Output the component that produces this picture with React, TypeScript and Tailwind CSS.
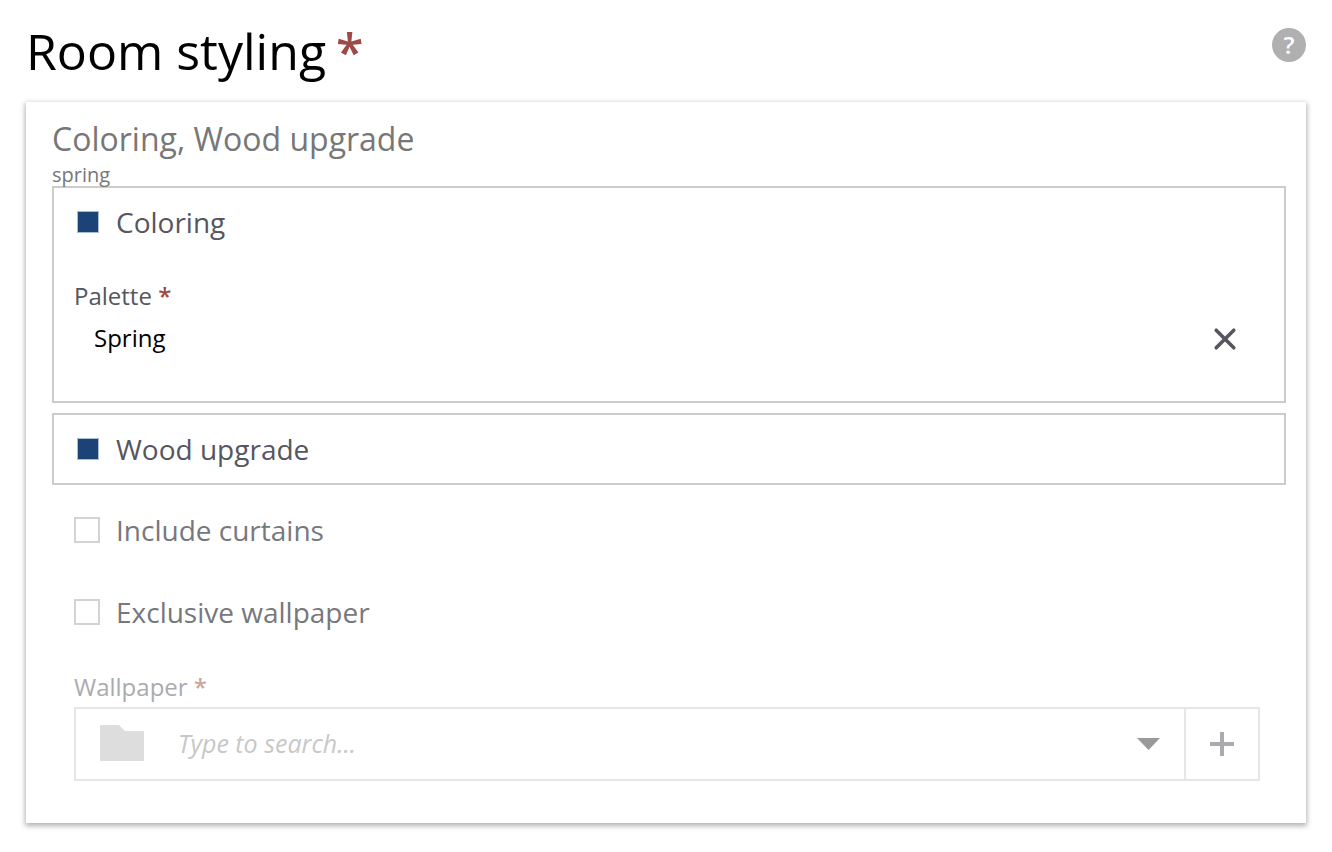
import { useState } from 'react';

type OptionProps = {
  label: string;
  checked: boolean;
  onChange: (checked: boolean) => void;
};

function Option({ label, checked, onChange }: OptionProps) {
  return (
    <label
      className={
        checked
          ? 'flex h-[68px] cursor-pointer items-center pl-6 text-[28px] leading-10 text-[#55565e]'
          : 'flex h-[72px] cursor-pointer items-center pl-[22px] text-[28px] leading-10 text-[#77787e]'
      }
    >
      <input
        type="checkbox"
        checked={checked}
        onChange={(e) => onChange(e.target.checked)}
        className={
          checked
            ? 'size-5 shrink-0 appearance-none bg-[#1b4378] outline-1 outline-[#a9bdd3]'
            : 'size-[26px] shrink-0 appearance-none border-2 border-[#d3d3d3] bg-white'
        }
      />
      <span className={checked ? 'ml-[18px]' : 'ml-4'}>{label}</span>
    </label>
  );
}

export default function App() {
  const [curtains, setCurtains] = useState(false);
  const [exclusive, setExclusive] = useState(false);
  const [coloring, setColoring] = useState(true);
  const [wood, setWood] = useState(true);

  return (
    <main className="bg-white px-[26px] pb-7 font-['Open_Sans',sans-serif]">
      <header className="flex items-start justify-between pb-4">
        <h1 className="pt-4 text-[50px] leading-[70px] text-black">
          Room styling<span className="ml-2.5 font-semibold text-[#9d4a46]">*</span>
        </h1>
        <button
          type="button"
          aria-label="Help"
          className="mt-7 flex size-[34px] items-center justify-center rounded-full bg-[#b0b0b0] text-2xl font-semibold text-white"
        >
          ?
        </button>
      </header>

      <section className="bg-white px-[26px] pt-[15px] pb-[42px] shadow-[0_2px_5px_1px_rgba(0,0,0,0.3)]">
        <h2 className="text-[32px] leading-[44px] text-[#777777]">Coloring, Wood upgrade</h2>
        <p className="h-[25px] text-xl leading-[27px] text-[#777777]">spring</p>

        <div className="-mr-1.5">
          <div className="border-2 border-[#cccccc] pb-[41px]">
            <Option label="Coloring" checked={coloring} onChange={setColoring} />
            <div className="mt-5 pr-[47px] pl-5">
              <h3 className="text-2xl leading-10 text-[#55565e]">
                Palette <span className="font-semibold text-[#9d4a46]">*</span>
              </h3>
              <div className="flex h-11 items-center justify-between pl-5">
                <span className="text-2xl text-black">Spring</span>
                <button type="button" aria-label="Remove Spring">
                  <svg width="24" height="26" viewBox="0 0 24 26" fill="none" stroke="#55565e" strokeWidth="3.6" strokeLinecap="round">
                    <path d="M3.2 5.2 20.8 22.800M20.8 5.2 3.2 22.800" />
                  </svg>
                </button>
              </div>
            </div>
          </div>

          <div className="mt-2.5 border-2 border-[#cccccc]">
            <Option label="Wood upgrade" checked={wood} onChange={setWood} />
          </div>

          <div className="mt-[9px] flex flex-col gap-2.5">
            <Option label="Include curtains" checked={curtains} onChange={setCurtains} />
            <Option label="Exclusive wallpaper" checked={exclusive} onChange={setExclusive} />
          </div>

          <div className="mt-[19px] pr-[26px] pl-[22px]">
            <label htmlFor="wallpaper" className="block text-2xl leading-10 text-[#aaabaf]">
              Wallpaper <span className="font-semibold text-[#cea5a3]">*</span>
            </label>
            <div className="flex h-[74px] border-2 border-[#e6e6e6]">
              <div className="flex flex-1 items-center pr-6 pl-6">
                <svg width="44" height="38" viewBox="0 0 44 38" fill="#dddddd" className="shrink-0">
                  <path d="M0 0h19l6 6h19v30H0z" />
                </svg>
                <input
                  id="wallpaper"
                  type="text"
                  placeholder="Type to search..."
                  className="ml-[34px] min-w-0 flex-1 bg-transparent text-[25px] text-black italic outline-none placeholder:text-[#c8c8c8]"
                />
                <button type="button" aria-label="Show wallpapers">
                  <svg width="24" height="14" viewBox="0 0 24 14" fill="#999999">
                    <path d="M1 1h23L12.500 13z" />
                  </svg>
                </button>
              </div>
              <button
                type="button"
                aria-label="Add wallpaper"
                className="flex w-[74px] items-center justify-center border-l-2 border-[#e6e6e6]"
              >
                <svg width="24" height="24" viewBox="0 0 24 24" fill="#aaaaaf">
                  <path d="M10 0h4v10h10v4H14v10h-4V14H0v-4h10z" />
                </svg>
              </button>
            </div>
          </div>
        </div>
      </section>
    </main>
  );
}
